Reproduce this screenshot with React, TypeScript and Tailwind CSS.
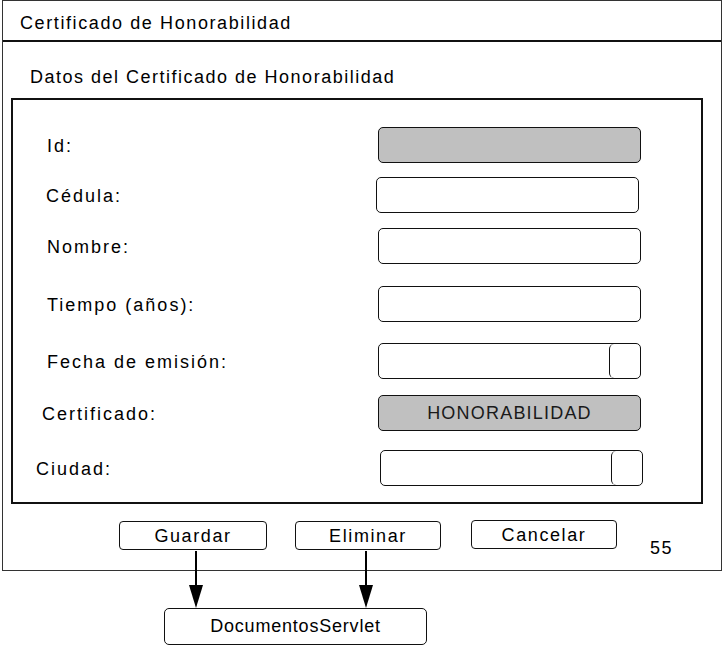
import React from 'react';

interface Row {
    label: string;
    labelPad: string;
    top: string;
    fieldRight: string;
    kind: 'gray' | 'text' | 'picker' | 'value';
    value?: string;
}

const rows: Row[] = [
    { label: 'Id:', labelPad: 'pl-[34px]', top: 'mt-[27px]', fieldRight: 'mr-[60px]', kind: 'gray' },
    { label: 'Cédula:', labelPad: 'pl-[33px]', top: 'mt-[14px]', fieldRight: 'mr-[62px]', kind: 'text' },
    { label: 'Nombre:', labelPad: 'pl-[34px]', top: 'mt-[15px]', fieldRight: 'mr-[60px]', kind: 'text' },
    { label: 'Tiempo (años):', labelPad: 'pl-[34px]', top: 'mt-[22px]', fieldRight: 'mr-[60px]', kind: 'text' },
    { label: 'Fecha de emisión:', labelPad: 'pl-[34px]', top: 'mt-[21px]', fieldRight: 'mr-[60px]', kind: 'picker' },
    { label: 'Certificado:', labelPad: 'pl-[29px]', top: 'mt-[16px]', fieldRight: 'mr-[60px]', kind: 'value', value: 'HONORABILIDAD' },
    { label: 'Ciudad:', labelPad: 'pl-[23px]', top: 'mt-[19px]', fieldRight: 'mr-[58px]', kind: 'picker' },
];

function Field({ row }: { row: Row }) {
    if (row.kind === 'gray') {
        return <div className="w-[263px] h-[36px] bg-[#c0c0c0] border-[1.5px] border-[#111] rounded-[5px]" />;
    }
    if (row.kind === 'value') {
        return (
            <div className="w-[263px] h-[36px] bg-[#c0c0c0] border-[1.5px] border-[#111] rounded-[5px] flex items-center justify-center text-[18px] tracking-[1.2px] text-[#1a1a1a]">
                {row.value}
            </div>
        );
    }
    if (row.kind === 'picker') {
        return (
            <div className="w-[263px] h-[36px] bg-white border-[1.5px] border-[#111] rounded-[5px] flex justify-end">
                <div className="w-[31px] h-full border-l-[1.5px] border-[#111] rounded-[5px]" />
            </div>
        );
    }
    return <div className="w-[263px] h-[36px] bg-white border-[1.5px] border-[#111] rounded-[5px]" />;
}

function Button({ label, w, ml, top }: { label: string; w: string; ml: string; top: string }) {
    return (
        <div className={`${w} ${ml} ${top} h-[29px] border-[1.5px] border-[#111] rounded-[4px] flex items-center justify-center text-[18px] tracking-[1.6px] pt-[1px]`}>
            {label}
        </div>
    );
}

export default function App() {
    return (
        <div className="relative w-[722px] h-[645px] bg-white text-black font-['Liberation_Sans',Arial,sans-serif] overflow-hidden">
            <div className="ml-[2px] w-[720px] h-[571px] border-[1.5px] border-[#333] flex flex-col">
                <div className="h-[41px] shrink-0 border-b-2 border-[#111] flex items-center pl-[17px] pt-[5px] text-[18px] tracking-[1.6px]">
                    Certificado de Honorabilidad
                </div>
                <div className="h-[22px] mt-[24px] pl-[27px] flex items-center text-[18px] tracking-[1.5px]">
                    Datos del Certificado de Honorabilidad
                </div>
                <div className="mt-[10px] ml-[8px] w-[692px] h-[406px] border-2 border-[#111] flex flex-col">
                    {rows.map((row) => (
                        <div key={row.label} className={`${row.top} h-[36px] flex items-center`}>
                            <div className={`${row.labelPad} pt-[3px] text-[18px] tracking-[2px] whitespace-nowrap`}>
                                {row.label}
                            </div>
                            <div className={`ml-auto ${row.fieldRight}`}>
                                <Field row={row} />
                            </div>
                        </div>
                    ))}
                </div>
                <div className="flex items-start">
                    <Button label="Guardar" w="w-[148px]" ml="ml-[116px]" top="mt-[17px]" />
                    <Button label="Eliminar" w="w-[146px]" ml="ml-[28px]" top="mt-[17px]" />
                    <Button label="Cancelar" w="w-[146px]" ml="ml-[30px]" top="mt-[16px]" />
                    <div className="ml-[33px] mt-[35px] text-[18px] tracking-[1.5px] leading-none">55</div>
                </div>
            </div>
            <div className="ml-[164px] mt-[37px] w-[263px] h-[37px] border-[1.5px] border-[#111] rounded-[5px] flex items-center justify-center text-[18px] tracking-[0.8px]">
                DocumentosServlet
            </div>
            <svg className="absolute left-0 top-0 pointer-events-none" width="722" height="645" viewBox="0 0 722 645">
                <line x1="196" y1="551" x2="196" y2="590" stroke="#000" strokeWidth="2" />
                <polygon points="189,585 203,585 196,608" fill="#000" />
                <line x1="366" y1="551" x2="366" y2="590" stroke="#000" strokeWidth="2" />
                <polygon points="359,585 373,585 366,608" fill="#000" />
            </svg>
        </div>
    );
}
